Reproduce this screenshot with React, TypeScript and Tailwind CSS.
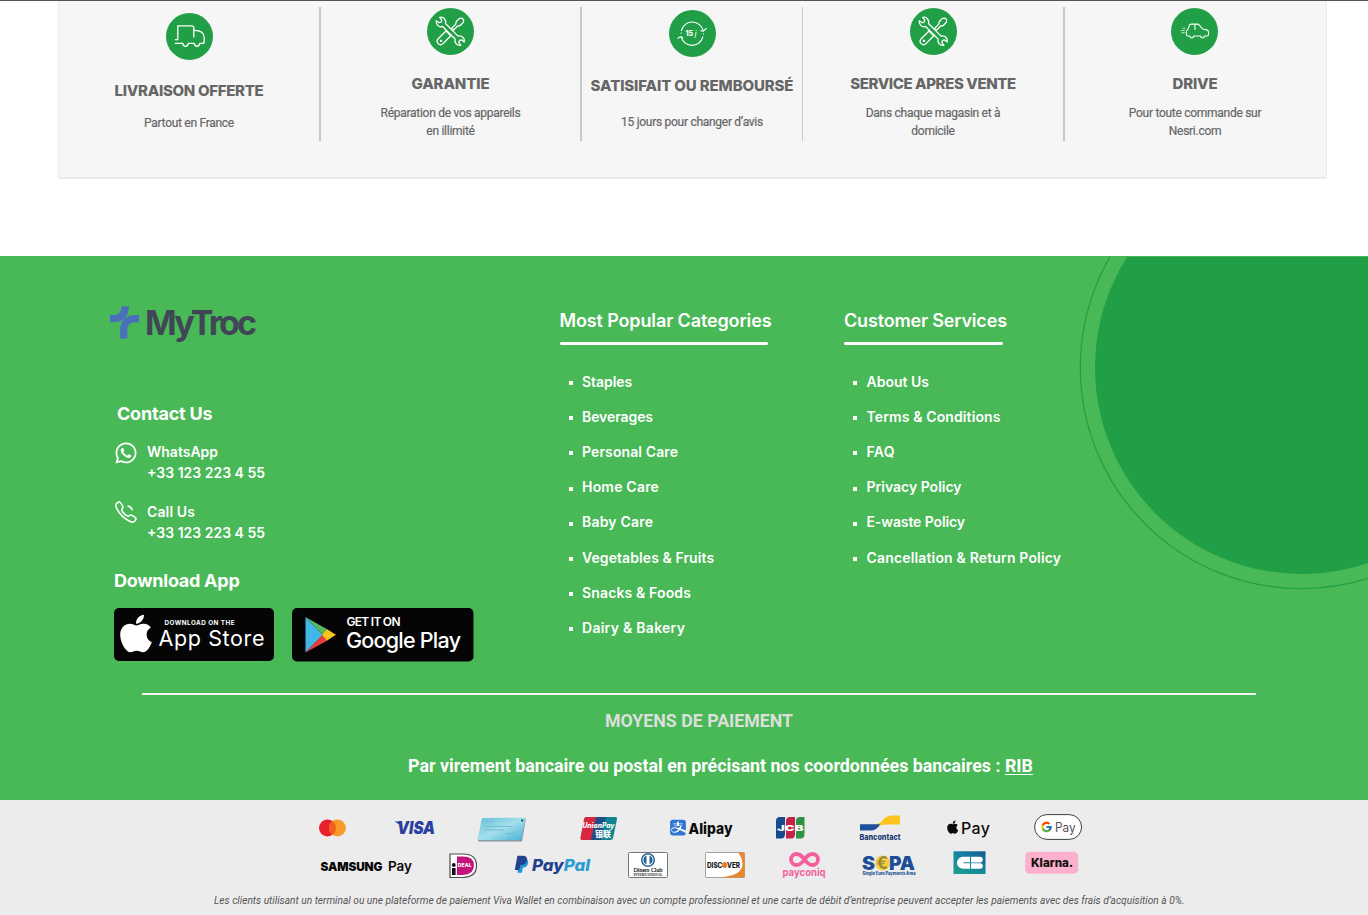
import type { ReactNode } from 'react';
import { FaAlipay, FaApple, FaWhatsapp } from 'react-icons/fa';
import { FcGoogle } from 'react-icons/fc';
import { IoCallOutline } from 'react-icons/io5';

const INTER = 'Inter, sans-serif';

function Disc({ children }: { children: ReactNode }) {
  return (
    <svg width="48" height="48" viewBox="0 0 48 48" fill="none" stroke="white" strokeWidth="1.3" strokeLinecap="round" strokeLinejoin="round" className="block">
      <circle cx="23.5" cy="23.5" r="23.5" fill="#219f46" stroke="none" />
      {children}
    </svg>
  );
}

function TruckIcon() {
  return (
    <Disc>
      <path d="M9.5 26.7h2.3V12.8h14q2 0 2 2V24" />
      <path d="M9.3 30.4h7.4q.6 3 2.8 3t2.8-3h5.9q.6 3 2.8 3t2.8-3h2.7q1.7 0 1.7-2V25c0-5-4-7.6-9.8-7.6" />
    </Disc>
  );
}

function ToolsIcon() {
  return (
    <Disc>
      <g transform="translate(23.5 23.3) rotate(-45)">
        <path d="M-3 -3.4H-14a3.4 3.4 0 0 0 0 6.8H-3zM3 -1.3H8.5L11 -2.8H15.5L17.5 -1V1L15.5 2.8H11L8.5 1.3H3z" />
        <circle cx="-13.5" cy="0" r=".6" />
      </g>
      <g transform="translate(23.3 23.3) rotate(45)">
        <path
          fill="#219f46"
          d="M-8.9 -2.1A4.9 4.9 0 0 0 -17.4 -2.4L-14 -1.9L-13 0L-14 1.9L-17.4 2.4A4.9 4.9 0 0 0 -8.9 2.1H8.9A4.9 4.9 0 0 0 17.4 2.4L14 1.9L13 0L14 -1.9L17.4 -2.4A4.9 4.9 0 0 0 8.9 -2.1Z"
        />
      </g>
    </Disc>
  );
}

function ReturnIcon() {
  return (
    <Disc>
      <path d="M12.4 20.5a11.2 11.2 0 0 1 21.8.4M33.8 27a11.2 11.2 0 0 1-21.6.2" strokeWidth="1.1" />
      <path d="M37.3 18.500l-3 2.600-2.600-.300M8.800 28.200l3-1.600 2 1.200M12 23v.2M34.400 23.800v.2" strokeWidth="1.1" />
      <text x="16.5" y="26" fontSize="7" fontWeight="800" fontFamily={INTER} fill="white" stroke="none">15 <tspan fontStyle="italic" fontWeight="500">j</tspan></text>
    </Disc>
  );
}

function CarIcon() {
  return (
    <Disc>
      <path
        strokeWidth="1.1"
        d="M17 28h1.8q.5 2 2 2t2-2h6.8q.5 2 2 2t2-2H36q1.6 0 1.6-2v-1.6q0-2-2-2.5l-4-.9-3.3-3.9q-.8-1-2-1h-6q-1.5 0-2 1.3L17 21.3q-1.6 1-1.6 3V26.500q0 1.500 1.600 1.500M24 16.500v5"
      />
      <path d="M12 20.300h2M10 22.500h3.500M11 24.700h2.300" stroke="#a9d9b5" strokeWidth="1.200" />
    </Disc>
  );
}

function Service({ icon, title, children, className }: { icon: ReactNode; title: ReactNode; children: ReactNode; className: string }) {
  return (
    <div className={`flex h-[134px] flex-col items-center text-center text-[#666] ${className}`}>
      {icon}
      {title}
      <p className="font-[Roboto] text-[12px] leading-[18px] tracking-[-0.28px] [-webkit-text-stroke:0.2px_#666]">{children}</p>
    </div>
  );
}

const titleBase = 'whitespace-nowrap font-[Inter] text-[15px] font-extrabold leading-5';

const categories = [
  ['Staples', 'tracking-[-0.05px]'],
  ['Beverages', 'tracking-[-0.08px]'],
  ['Personal Care', 'tracking-[0.11px]'],
  ['Home Care', 'tracking-[0.2px]'],
  ['Baby Care', 'tracking-[0.2px]'],
  ['Vegetables & Fruits', 'tracking-[0.08px]'],
  ['Snacks & Foods', 'tracking-[0.14px]'],
  ['Dairy & Bakery', 'tracking-[0.27px]'],
];

const services = [
  ['About Us', 'tracking-[0px]'],
  ['Terms & Conditions', 'tracking-[0.12px]'],
  ['FAQ', 'tracking-[0.29px]'],
  ['Privacy Policy', 'tracking-[0px]'],
  ['E-waste Policy', 'tracking-[-0.11px]'],
  ['Cancellation & Return Policy', 'tracking-[0.16px]'],
];

function LinkList({ items }: { items: string[][] }) {
  return (
    <ul className="mt-[19px] pl-[9px]">
      {items.map(([label, tracking]) => (
        <li key={label} className="flex h-[35.2px] items-center gap-[9.500px] text-sm font-semibold">
          <span className="mt-[3px] size-1 bg-white" />
          <span className={`whitespace-nowrap ${tracking}`}>{label}</span>
        </li>
      ))}
    </ul>
  );
}

function MyTrocLogo() {
  return (
    <svg width="150" height="36" viewBox="0 0 150 36" className="block overflow-visible">
      <path d="M0 12.700H3Q15 12.700 15.300 .4" fill="none" stroke="#4a70bc" strokeWidth="7.300" />
      <path d="M26 12.700Q13.700 12.700 13.700 25" fill="none" stroke="#49b857" strokeWidth="8.600" />
      <path d="M29 12.700H26Q13.700 12.700 13.700 25V32.500" fill="none" stroke="#4a70bc" strokeWidth="7.300" />
      <text x="35" y="28.800" fontFamily={INTER} fontSize="34" fontWeight="700" fill="#404656" textLength="112" lengthAdjust="spacing">MyTroc</text>
    </svg>
  );
}

function AppStoreBadge() {
  return (
    <svg width="160" height="53" viewBox="0 0 160 53">
      <rect width="160" height="53" rx="5" fill="#050506" />
      <FaApple x={0.5} y={4} size={43} color="white" />
      <text x="50.500" y="17" fontFamily={INTER} fontSize="6.300" fontWeight="700" fill="white" textLength="70">DOWNLOAD ON THE</text>
      <text x="44.500" y="37.500" fontFamily={INTER} fontSize="21.500" fontWeight="400" fill="white" textLength="106">App Store</text>
    </svg>
  );
}

function GooglePlayBadge() {
  return (
    <svg width="182" height="54" viewBox="0 0 182 54">
      <rect width="181.500" height="53.500" rx="5" fill="#050506" />
      <path d="M13.500 9v35.500L31 27z" fill="#3fb8e8" />
      <path d="M13.500 9L35.500 21.500L31 27z" fill="#5bb660" />
      <path d="M13.500 44.500L35.500 32.500L30.500 26.500z" fill="#e43e40" />
      <path d="M35 21.300L44 26.800L35 32.500L30 27z" fill="#f8c31b" />
      <text x="54.500" y="18" fontFamily={INTER} fontSize="12" fontWeight="600" fill="white" textLength="54">GET IT ON</text>
      <text x="54" y="40" fontFamily={INTER} fontSize="21.500" fontWeight="500" fill="white" textLength="115">Google Play</text>
    </svg>
  );
}

function Pay({ className = '', w, children }: { className?: string; w: number; children: ReactNode }) {
  return (
    <svg width={w} height="32" viewBox={`0 0 ${w} 32`} fontFamily={INTER} className={`block shrink-0 overflow-visible ${className}`}>
      {children}
    </svg>
  );
}

function PaymentRowOne() {
  return (
    <div className="flex h-8 pl-[319px]">
      <Pay w={27}>
        <circle cx="8.500" cy="16" r="8.500" fill="#e8222c" />
        <circle cx="18.400" cy="16" r="8.500" fill="#f79a2b" />
        <path d="M13.450 9.100a8.500 8.500 0 0 1 0 13.800a8.500 8.500 0 0 1 0-13.800" fill="#f2601f" />
      </Pay>
      <Pay w={42} className="ml-[47px]">
        <text x="4" y="22" fontSize="17" fontWeight="900" fontStyle="italic" fill="#2a3f9f" textLength="38" lengthAdjust="spacingAndGlyphs">VISA</text>
        <path d="M1.500 9.600h6l2 5z" fill="#2a3f9f" />
      </Pay>
      <Pay w={49} className="ml-[42px]">
        <defs>
          <linearGradient id="cheque" x1="0" y1="0" x2="1" y2="1">
            <stop offset="0" stopColor="#63c0d8" />
            <stop offset=".5" stopColor="#a5dfec" />
            <stop offset="1" stopColor="#3fb2d3" />
          </linearGradient>
        </defs>
        <path d="M5 7.500L49 6L45 29.500H1z" fill="#8b9aa3" />
        <path d="M5 6L48.500 5.700L44 28H.500z" fill="url(#cheque)" />
        <path d="M8 10h9M8 14.500h28M7 18h20M29 21.500h10" stroke="#6fb4ca" strokeWidth=".8" fill="none" />
        <path d="M44.500 7l2 1-1 2-1.500-1z" fill="#24516e" />
      </Pay>
      <Pay w={38} className="ml-[54px]">
        <path d="M6 5H17L12 28H2Q0 28 .4 26L4 7Q4.400 5 6 5z" fill="#d7263d" />
        <path d="M16 5H27L22 28H11z" fill="#1f4e86" />
        <path d="M26 5H35.500Q37.500 5 37 7L33 26Q32.600 28 30.500 28H21z" fill="#0f8390" />
        <text x="2.500" y="15.500" fontSize="7" fontWeight="800" fontStyle="italic" fill="white" textLength="32" lengthAdjust="spacingAndGlyphs">UnionPay</text>
        <text x="15" y="25" fontSize="8" fontWeight="900" fill="white" fontFamily="'Noto Sans CJK SC', sans-serif" textLength="16">银联</text>
      </Pay>
      <Pay w={63} className="ml-[52px]">
        <rect x="1.500" y="9" width="13" height="13" fill="white" />
        <FaAlipay x={-1} y={6.6} size={18} color="#2f74d0" />
        <text x="18.500" y="21.500" fontSize="15" fontWeight="800" fill="#0c0c0c" textLength="44" lengthAdjust="spacingAndGlyphs">Alipay</text>
      </Pay>
      <Pay w={29} className="ml-[43px]">
        <path d="M4 5H9V22Q9 26.500 5 26.500H0V9Q0 5 4 5z" fill="#174a8c" />
        <path d="M14 5H19V22Q19 26.500 15 26.500H10V9Q10 5 14 5z" fill="#c22347" />
        <path d="M24 5H28.500V22Q28.500 26.500 24.500 26.500H20V9Q20 5 24 5z" fill="#2c9342" />
        <text x="1" y="18.800" fontSize="8" fontWeight="900" fill="white" textLength="26.500" lengthAdjust="spacingAndGlyphs">JCB</text>
      </Pay>
      <Pay w={42} className="ml-[54px]">
        <path d="M1 12H16Q21 12 24 8Q27 3.500 33 3.500H41V12.500H27Q22 12.500 20 14.500L17.500 12.500z" fill="#fdc41f" />
        <path d="M1 12.200H21Q18 18.500 11 18.500H1z" fill="#1d509f" />
        <path d="M1 3.500H31Q25 4.500 22 9Q20 11.800 16 12H1z" fill="#ececec" />
        <text x=".5" y="27.500" fontSize="8" fontWeight="800" fill="#1a3c73" textLength="41" lengthAdjust="spacingAndGlyphs">Bancontact</text>
      </Pay>
      <Pay w={43} className="ml-[46px]">
        <FaApple x={-1.8} y={7.6} size={15} color="#0a0a0a" />
        <text x="14" y="21.800" fontSize="16" fontWeight="500" fill="#0a0a0a" textLength="29">Pay</text>
      </Pay>
      <Pay w={48} className="ml-[44px]">
        <rect x=".6" y="2.600" width="47" height="24.800" rx="12.400" fill="white" stroke="#3c4043" strokeWidth="1" />
        <FcGoogle x={6.3} y={8.7} size={12.5} />
        <text x="21" y="20" fontSize="12.500" fontWeight="400" fill="#4f5357" textLength="20.500" lengthAdjust="spacingAndGlyphs">Pay</text>
      </Pay>
    </div>
  );
}

function PaymentRowTwo() {
  return (
    <div className="mt-[5px] flex h-8 pl-[320px]">
      <Pay w={92}>
        <text x=".5" y="22" fontSize="11.800" fontWeight="900" fill="#080808" textLength="62" lengthAdjust="spacing">SAMSUNG</text>
        <text x="68" y="22" fontSize="13" fontWeight="600" fill="#080808" textLength="24" lengthAdjust="spacingAndGlyphs">Pay</text>
      </Pay>
      <Pay w={28} className="ml-[37px]">
        <path d="M1 5H14Q27.500 5 27.500 16.500T14 28.500H1z" fill="white" stroke="#4a4a4a" strokeWidth="1.200" />
        <path d="M8 7.500H14Q25 7.500 25 16.500T14 26H8z" fill="#c5137c" />
        <circle cx="4.800" cy="16" r="1.900" fill="#111" />
        <path d="M3 19h3.600v7H3z" fill="#111" />
        <text x="8.700" y="17.800" fontSize="5" fontWeight="800" fill="white" textLength="14">DEAL</text>
      </Pay>
      <Pay w={76} className="ml-[37px]">
        <path d="M4.800 10H12.500Q15 12 13.800 15.200Q12.500 18.600 8.800 18.600L7.800 23.800H3.600z" fill="#1b9ad6" />
        <path d="M3.400 6.800H9.500Q14 7.400 12.800 11.800Q11.600 16.300 6.200 16.300L5.200 21H.800z" fill="#22418f" />
        <text x="18" y="21.500" fontSize="16" fontWeight="800" fontStyle="italic" fill="#22408c" textLength="58" lengthAdjust="spacingAndGlyphs">Pay<tspan fill="#2b9bd3">Pal</tspan></text>
      </Pay>
      <Pay w={40} className="ml-[38px]">
        <rect x=".5" y="3.500" width="39" height="25" rx="1" fill="white" stroke="#60656b" strokeWidth=".9" />
        <circle cx="20" cy="11" r="6.300" fill="#fff" stroke="#28648f" strokeWidth="1.500" />
        <path d="M18.500 6.800v8.400a4.400 4.400 0 0 1 0-8.400M21.500 6.800v8.400a4.400 4.400 0 0 0 0-8.400" fill="#28648f" />
        <text x="5.500" y="23" fontSize="7" fontFamily="'Liberation Serif', serif" fill="#111" textLength="29" lengthAdjust="spacingAndGlyphs" stroke="#111" strokeWidth=".2">Diners Club</text>
        <text x="5.500" y="26.800" fontSize="3.600" fontWeight="700" fontFamily="'Liberation Serif', serif" fill="#111" textLength="29" lengthAdjust="spacingAndGlyphs">INTERNATIONAL</text>
      </Pay>
      <Pay w={40} className="ml-[37px]">
        <rect x=".5" y="3.500" width="39" height="25" rx="1" fill="white" stroke="#8b7c70" strokeWidth=".7" />
        <path d="M33 3.500H39.500V28.500H13Q37.500 27 37.500 15Q37 8 33 3.500z" fill="#ea8630" />
        <text x="2" y="18.500" fontSize="7" fontWeight="800" fill="#151515" textLength="33" lengthAdjust="spacingAndGlyphs">DISC<tspan fill="#ea7a28">O</tspan>VER</text>
        <circle cx="19.500" cy="16" r="2.600" fill="#ea7a28" />
      </Pay>
      <Pay w={44} className="ml-[37px]">
        <path d="M22.500 10.500C19 5.500 16.500 5 14.500 5A5.500 5.500 0 0 0 14.500 16C16.500 16 19 15.500 22.500 10.500C26 5.500 28.500 5 30.500 5A5.500 5.500 0 0 1 30.500 16C28.500 16 26 15.500 22.500 10.500z" fill="none" stroke="#f4609c" strokeWidth="3.800" />
        <text x=".5" y="26.500" fontSize="10.500" fontWeight="700" fill="#f4609c" textLength="43" lengthAdjust="spacingAndGlyphs">payconiq</text>
      </Pay>
      <Pay w={55} className="ml-[35px]">
        <circle cx="21.500" cy="14" r="7.500" fill="#f4cf3f" />
        <text x="1" y="20.500" fontSize="18.500" fontWeight="900" fill="#1d4d97" textLength="13" lengthAdjust="spacingAndGlyphs">S</text>
        <text x="15.500" y="20" fontSize="17" fontWeight="700" fill="#9a8c3c" textLength="11.500" lengthAdjust="spacingAndGlyphs">€</text>
        <text x="28" y="20.500" fontSize="18.500" fontWeight="900" fill="#1d4d97" textLength="26" lengthAdjust="spacingAndGlyphs">PA</text>
        <text x="1.500" y="25.500" fontSize="4.300" fontWeight="800" fill="#1d4d97" textLength="53" lengthAdjust="spacingAndGlyphs">Single Euro Payments Area</text>
      </Pay>
      <Pay w={33} className="ml-[37px]">
        <defs>
          <linearGradient id="cb" x1="0" y1="1" x2="1" y2="0">
            <stop offset="0" stopColor="#21a085" />
            <stop offset=".5" stopColor="#1586a0" />
            <stop offset="1" stopColor="#155a92" />
          </linearGradient>
        </defs>
        <rect x=".5" y="2.300" width="32" height="22.700" fill="url(#cb)" />
        <path d="M17 13.300V7.800H10a6 6 0 0 0 0 12H17V14.300H10.500V13.300zM18 7.800H27a2.800 2.800 0 0 1 0 5.600H18zM18 14.200H27a2.800 2.800 0 0 1 0 5.600H18z" fill="white" />
      </Pay>
      <Pay w={54} className="ml-[39px]">
        <rect x=".2" y="2.800" width="53" height="22" rx="4.500" fill="#fbb0cd" />
        <text x="6" y="18" fontSize="11.800" fontWeight="800" fill="#120d10" textLength="42" lengthAdjust="spacingAndGlyphs">Klarna.</text>
      </Pay>
    </div>
  );
}

export default function App() {
  return (
    <div className="flex h-[915px] w-[1368px] flex-col overflow-hidden bg-white font-[Inter]">
      <div className="h-px shrink-0 bg-[#555]" />

      <section className="ml-[58px] mr-[41px] flex h-[178px] shrink-0 border-x border-b-2 border-[#ebebeb] bg-[#f6f6f6] pt-[6px]">
        <Service
          icon={<div className="ml-0.5"><TruckIcon /></div>}
          className="w-[262px] border-r-2 border-[#c9c9c9] pt-[6px]"
          title={<h3 className={`${titleBase} mt-5 mb-[13px] tracking-[-0.3px]`}>LIVRAISON OFFERTE</h3>}
        >
          Partout en France
        </Service>
        <Service
          icon={<ToolsIcon />}
          className="w-[261px] border-r-2 border-[#c9c9c9] pt-px"
          title={<h3 className={`${titleBase} mt-[18px] mb-[10px] tracking-[-0.12px]`}>GARANTIE</h3>}
        >
          Réparation de vos appareils<br />en illimité
        </Service>
        <Service
          icon={<div className="ml-0.5"><ReturnIcon /></div>}
          className="w-[221px] border-r border-[#c9c9c9] pt-[3px]"
          title={<h3 className={`${titleBase} mt-[18px] mb-[17px] tracking-[-0.12px]`}>SATISIFAIT OU REMBOURSÉ</h3>}
        >
          15 jours pour changer d’avis
        </Service>
        <Service
          icon={<div className="ml-0.5"><ToolsIcon /></div>}
          className="w-[262px] border-r-2 border-[#c9c9c9] pt-px"
          title={<h3 className={`${titleBase} mt-[18px] mb-[10px] tracking-[-0.4px]`}>SERVICE APRES VENTE</h3>}
        >
          Dans chaque magasin et à<br />domicile
        </Service>
        <Service
          icon={<CarIcon />}
          className="w-[260px] pt-px"
          title={<h3 className={`${titleBase} mt-[18px] mb-[10px] tracking-[-0.18px]`}>DRIVE</h3>}
        >
          Pour toute commande sur<br />Nesri.com
        </Service>
      </section>

      <footer className="relative mt-[77px] h-[544px] shrink-0 overflow-hidden bg-[#49b857] text-white">
        <svg width="300" height="340" className="absolute right-0 top-px">
          <circle cx="233.500" cy="110.500" r="206.500" fill="#219f46" />
          <circle cx="233.500" cy="110.500" r="221.200" fill="none" stroke="#219f46" strokeWidth="1.200" />
        </svg>

        <div className="relative flex h-[437px] pl-[110px]">
          <div className="w-[449.500px] pt-[50px]">
            <MyTrocLogo />
            <h2 className="mt-[60px] ml-[7px] text-lg font-bold leading-6 tracking-[-0.2px]">Contact Us</h2>
            <div className="mt-[15px] flex text-sm font-semibold leading-[21px]">
              <FaWhatsapp className="ml-[3.500px] size-[24px]" />
              <div className="ml-[9.500px]">
                WhatsApp
                <br />
                +33 123 223 4 55
              </div>
            </div>
            <div className="mt-[18px] flex text-sm font-semibold leading-[21px]">
              <svg width="24" height="24" viewBox="0 0 24 24" className="ml-[3.500px] overflow-visible">
                <IoCallOutline x={-0.5} y={-1.5} size={25} />
                <path d="M14 5q3.200.8 4.300 4" fill="none" stroke="white" strokeWidth="1.400" strokeLinecap="round" />
              </svg>
              <div className="ml-[9.500px]">
                <span className="tracking-[0.13px]">Call Us</span>
                <br />
                +33 123 223 4 55
              </div>
            </div>
            <h2 className="mt-[25.500px] ml-[4px] text-lg font-bold leading-6 tracking-[-0.26px]">Download App</h2>
            <div className="mt-[15.500px] ml-[4px] flex gap-[18px]">
              <AppStoreBadge />
              <GooglePlayBadge />
            </div>
          </div>

          <div className="w-[284.500px] pt-[53px]">
            <h2 className="text-lg font-semibold leading-6 tracking-[-0.13px]">Most Popular Categories</h2>
            <div className="mt-[9px] h-[3px] w-[208px] rounded-full bg-white" />
            <LinkList items={categories} />
          </div>

          <div className="pt-[53px]">
            <h2 className="text-lg font-semibold leading-6 tracking-[-0.18px]">Customer Services</h2>
            <div className="mt-[9px] h-[3px] w-[159px] rounded-full bg-white" />
            <LinkList items={services} />
          </div>
        </div>

        <div className="ml-[142px] h-[2px] w-[1114px] bg-[#f1f7f1]" />
        <h2 className="mt-[14px] ml-[142px] w-[1114px] text-center font-[Roboto] text-[17.750px] font-bold leading-6 text-[#dcdfdc]">MOYENS DE PAIEMENT</h2>
        <p className="mt-[21px] pl-[408px] font-[Roboto] text-[17.830px] font-bold leading-6">
          Par virement bancaire ou postal en précisant nos coordonnées bancaires : <a className="underline decoration-1 underline-offset-2">RIB</a>
        </p>
      </footer>

      <div className="h-[115px] shrink-0 bg-[#ececec] pt-3">
        <PaymentRowOne />
        <PaymentRowTwo />
        <p className="mt-[12px] whitespace-nowrap pl-[214px] font-[Roboto] text-[10.200px] italic leading-4 text-[#555]">
          Les clients utilisant un terminal ou une plateforme de paiement Viva Wallet en combinaison avec un compte professionnel et une carte de débit d’entreprise peuvent accepter les paiements avec des frais d’acquisition à 0%.
        </p>
      </div>
    </div>
  );
}
